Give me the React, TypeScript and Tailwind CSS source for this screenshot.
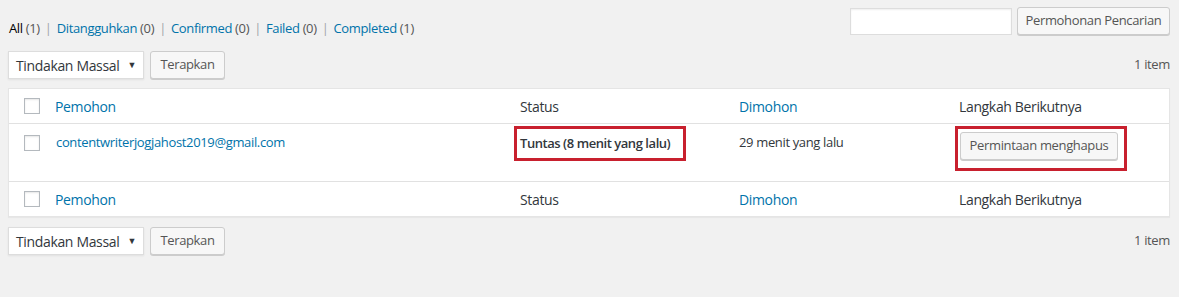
import React from "react";

const font = { fontFamily: '"Open Sans", "Noto Sans", sans-serif' };

function Checkbox() {
  return <span className="block w-[16px] h-[16px] bg-white border border-[#b4b9be] shadow-[inset_0_1px_2px_rgba(0,0,0,0.1)]" />;
}

function Btn({ children, className = "" }: { children: React.ReactNode; className?: string }) {
  return (
    <span
      className={
        "inline-flex items-center justify-center whitespace-nowrap h-[28px] bg-[#f7f7f7] border border-[#cccccc] rounded-[3px] shadow-[0_1px_0_#cccccc] text-[13px] text-[#555555] " +
        className
      }
    >
      {children}
    </span>
  );
}

function BulkBar() {
  return (
    <div className="flex items-center justify-between h-[28px]">
      <div className="flex items-center gap-[6px]">
        <div className="flex items-center justify-between whitespace-nowrap w-[136px] h-[28px] bg-white border border-[#dddddd] pl-[7px] pr-[7px] text-[14px] text-[#32373c] shadow-[0_1px_2px_rgba(0,0,0,0.07)]">
          <span>Tindakan Massal</span>
          <span className="text-[9px] text-[#32373c]">▼</span>
        </div>
        <Btn className="w-[75px]">Terapkan</Btn>
      </div>
      <span className="text-[13px] text-[#555555]">1 item</span>
    </div>
  );
}

const cols = "grid grid-cols-[38px_463px_219px_220px_1fr]";

function HeadRow({ border }: { border: "b" | "t" }) {
  return (
    <div className={cols + " h-[35px] items-center " + (border === "b" ? "border-b border-[#e1e1e1]" : "border-t border-[#e1e1e1]")}>
      <div className="pl-[15px]"><Checkbox /></div>
      <div className="pl-[8px] text-[14px] text-[#0073aa]">Pemohon</div>
      <div className="pl-[10px] text-[14px] text-[#32373c]">Status</div>
      <div className="pl-[10px] text-[14px] text-[#0073aa]">Dimohon</div>
      <div className="pl-[10px] text-[14px] text-[#32373c]">Langkah Berikutnya</div>
    </div>
  );
}

function Sep() {
  return <span className="mx-[5px] text-[#a0a5aa]">|</span>;
}

export default function App() {
  return (
    <div className="w-[1179px] h-[297px] bg-[#f1f1f1] pl-[8px] pr-[9px] pt-[7px] tracking-[-0.35px]" style={font}>
      <div className="flex justify-between items-start h-[28px]">
        <div className="pt-[12px] text-[13px] text-[#555555] pl-[1px] whitespace-nowrap">
          <span className="text-black">All</span> <span>(1)</span>
          <Sep />
          <span className="text-[#0073aa]">Ditangguhkan</span> <span>(0)</span>
          <Sep />
          <span className="text-[#0073aa]">Confirmed</span> <span>(0)</span>
          <Sep />
          <span className="text-[#0073aa]">Failed</span> <span>(0)</span>
          <Sep />
          <span className="text-[#0073aa]">Completed</span> <span>(1)</span>
        </div>
        <div className="flex items-center gap-[5px]">
          <div className="w-[162px] h-[27px] bg-white border border-[#dddddd] shadow-[inset_0_1px_2px_rgba(0,0,0,0.07)]" />
          <Btn className="w-[153px]">Permohonan Pencarian</Btn>
        </div>
      </div>
      <div className="mt-[16px]">
        <BulkBar />
      </div>
      <div className="mt-[9px] bg-white border border-[#e5e5e5] shadow-[0_1px_1px_rgba(0,0,0,0.04)]">
        <HeadRow border="b" />
        <div className={cols + " h-[57px] items-start"}>
          <div className="pl-[15px] pt-[11px]"><Checkbox /></div>
          <div className="pl-[9px] pt-[9px] text-[13px] text-[#0073aa]">contentwriterjogjahost2019@gmail.com</div>
          <div className="pl-[4px] pt-[2px]">
            <div className="flex items-center w-[172px] h-[35px] border-[3px] border-[#c8202e] pl-[3px] text-[13px] font-semibold tracking-[-0.45px] text-[#32373c] whitespace-nowrap">
              Tuntas (8 menit yang lalu)
            </div>
          </div>
          <div className="pl-[10px] pt-[9px] text-[13px] text-[#32373c]">29 menit yang lalu</div>
          <div className="pl-[6px] pt-[2px]">
            <div className="flex w-[172px] h-[45px] border-[3px] border-[#c8202e] pl-[2px] pt-[3px]">
              <Btn className="w-[158px]">Permintaan menghapus</Btn>
            </div>
          </div>
        </div>
        <HeadRow border="t" />
      </div>
      <div className="mt-[10px]">
        <BulkBar />
      </div>
    </div>
  );
}
